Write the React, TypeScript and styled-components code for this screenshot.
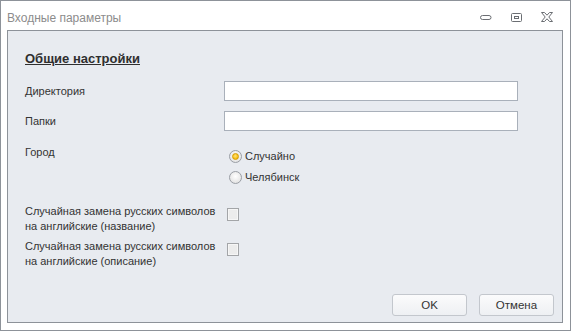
import React, { useState } from "react";
import styled, { createGlobalStyle } from "styled-components";

const Global = createGlobalStyle`
  html, body { margin: 0; padding: 0; background: #ffffff; }
  body { font-family: "Liberation Sans", Arial, sans-serif; }
  * { box-sizing: border-box; }
`;

const Window = styled.div`
  width: 571px;
  height: 331px;
  border: 1px solid #8d9299;
  background: #ffffff;
  display: flex;
  flex-direction: column;
  padding: 0 7px 7px 6px;
`;

const TitleBar = styled.div`
  height: 29px;
  display: flex;
  align-items: center;
  padding-top: 4px;
`;

const Title = styled.div`
  flex: 1;
  font-size: 12px;
  color: #8c8c8c;
`;

const TitleButtons = styled.div`
  display: flex;
  align-items: center;
  margin-right: 0;
`;

const TitleBtn = styled.span`
  width: 31px;
  height: 20px;
  display: flex;
  align-items: center;
  justify-content: center;
`;

const Panel = styled.div`
  flex: 1;
  border: 1px solid #8d9299;
  background: #e8ebf0;
  padding: 18px 8px 6px 17px;
  display: flex;
  flex-direction: column;
  color: #333333;
  font-size: 11px;
`;

const Heading = styled.div`
  font-weight: bold;
  font-size: 13px;
  text-decoration: underline;
  color: #2f2f2f;
  height: 19px;
  line-height: 19px;
  margin-bottom: 13px;
`;

const Row = styled.div<{ $align?: string; $mb?: number }>`
  display: grid;
  grid-template-columns: 199px 294px;
  align-items: ${(p) => p.$align || "center"};
  margin-bottom: ${(p) => p.$mb ?? 0}px;
`;

const Label = styled.div<{ $pt?: number }>`
  line-height: 15px;
  padding-top: ${(p) => p.$pt ?? 0}px;
`;

const Input = styled.input`
  height: 20px;
  width: 294px;
  border: 1px solid #a9b0ba;
  background: #ffffff;
  outline: none;
  margin: 0;
  font: inherit;
`;

const RadioGroup = styled.div`
  display: flex;
  flex-direction: column;
  gap: 7px;
  padding-left: 5px;
  padding-top: 5px;
`;

const RadioItem = styled.label`
  display: flex;
  align-items: center;
  gap: 3px;
  height: 14px;
  cursor: default;
`;

const RadioCircle = styled.span<{ $on: boolean }>`
  width: 13px;
  height: 13px;
  border-radius: 50%;
  border: 1px solid #9a9ea5;
  background: radial-gradient(circle at 50% 40%, #ffffff 0%, #e6e6e6 70%, #d5d5d5 100%);
  display: flex;
  align-items: center;
  justify-content: center;
  &::after {
    content: "";
    display: ${(p) => (p.$on ? "block" : "none")};
    width: 7px;
    height: 7px;
    border-radius: 50%;
    background: radial-gradient(circle at 45% 40%, #ffe27a 0%, #f7c21a 60%, #e0a000 100%);
    border: 1px solid #d79b00;
    box-sizing: border-box;
  }
`;

const CheckBox = styled.span`
  width: 12px;
  height: 13px;
  border: 1px solid #a3a5a8;
  background: #ececec;
  box-shadow: inset 0 0 0 1px #f6f6f6;
  margin-left: 3px;
  margin-top: 4px;
`;

const Footer = styled.div`
  margin-top: auto;
  display: flex;
  justify-content: flex-end;
  gap: 12px;
`;

const Button = styled.button`
  width: 75px;
  height: 22px;
  border: 1px solid #c3c7cd;
  border-radius: 3px;
  background: linear-gradient(#fbfbfc, #eef0f3);
  font: inherit;
  font-size: 11.5px;
  color: #333333;
  padding: 0;
`;

const MinIcon = () => (
  <svg width="12" height="6" viewBox="0 0 12 6">
    <rect x="0.5" y="0.5" width="10.5" height="4" rx="2" fill="none" stroke="#6b6e73" />
  </svg>
);

const MaxIcon = () => (
  <svg width="12" height="10" viewBox="0 0 12 10">
    <rect x="0.5" y="0.5" width="10" height="8" rx="1" fill="none" stroke="#6b6e73" />
    <rect x="3.5" y="3.5" width="4" height="2" fill="none" stroke="#6b6e73" />
  </svg>
);

const CloseIcon = () => (
  <svg width="13" height="11" viewBox="0 0 13 11">
    <path
      d="M0.5 0.5 H3.5 L6 3.2 L8.5 0.5 H11.5 L7.8 5 L11.5 9.5 H8.5 L6 6.8 L3.5 9.5 H0.5 L4.2 5 Z"
      fill="none"
      stroke="#6b6e73"
      strokeWidth="1"
      strokeLinejoin="round"
    />
  </svg>
);

export default function App() {
  const [city, setCity] = useState("random");
  return (
    <>
      <Global />
      <Window>
        <TitleBar>
          <Title>Входные параметры</Title>
          <TitleButtons>
            <TitleBtn><MinIcon /></TitleBtn>
            <TitleBtn><MaxIcon /></TitleBtn>
            <TitleBtn><CloseIcon /></TitleBtn>
          </TitleButtons>
        </TitleBar>
        <Panel>
          <Heading>Общие настройки</Heading>
          <Row $mb={10}>
            <Label>Директория</Label>
            <Input />
          </Row>
          <Row $mb={13}>
            <Label>Папки</Label>
            <Input />
          </Row>
          <Row $align="start" $mb={20}>
            <Label $pt={1}>Город</Label>
            <RadioGroup>
              <RadioItem onClick={() => setCity("random")}>
                <RadioCircle $on={city === "random"} />
                Случайно
              </RadioItem>
              <RadioItem onClick={() => setCity("chel")}>
                <RadioCircle $on={city === "chel"} />
                Челябинск
              </RadioItem>
            </RadioGroup>
          </Row>
          <Row $align="start" $mb={5}>
            <Label>
              Случайная замена русских символов
              <br />
              на английские (название)
            </Label>
            <CheckBox />
          </Row>
          <Row $align="start">
            <Label>
              Случайная замена русских символов
              <br />
              на английские (описание)
            </Label>
            <CheckBox />
          </Row>
          <Footer>
            <Button>OK</Button>
            <Button>Отмена</Button>
          </Footer>
        </Panel>
      </Window>
    </>
  );
}
